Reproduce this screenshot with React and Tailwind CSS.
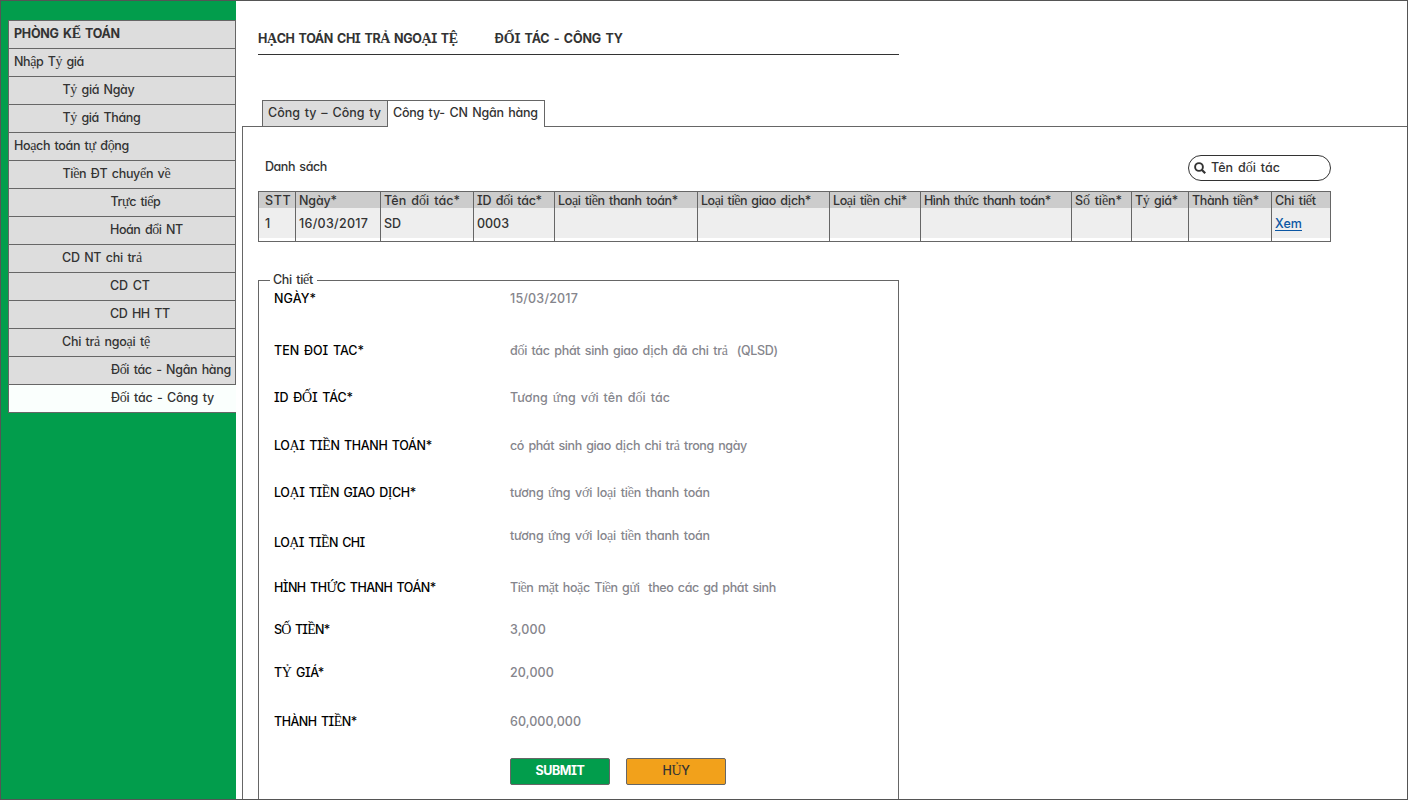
import { useLayoutEffect, useRef } from "react";

const EXTENDED = /([\u1EA0-\u1EF9]+)/;

// Text run set to a given width; stacked Vietnamese letters use the serif face.
function Txt({ w, className = "", children }) {
  const ref = useRef(null);
  useLayoutEffect(() => {
    const el = ref.current;
    el.style.letterSpacing = "0px";
    const natural = el.getBoundingClientRect().width;
    el.style.letterSpacing = `${(w - natural) / (children.length - 0.5)}px`;
  }, [w, children]);
  return (
    <span ref={ref} className={`inline-block shrink-0 self-start whitespace-pre leading-[18px] ${className}`}>
      {children.split(EXTENDED).map((part, i) =>
        i % 2 ? (
          <span key={i} className="font-['Liberation_Serif',serif] text-[14px] leading-none">{part}</span>
        ) : (
          part
        )
      )}
    </span>
  );
}

const MENU = [
  ["PHÒNG KẾ TOÁN", 106, "pl-[5px] font-bold"],
  ["Nhập Tỷ giá", 70, "pl-[5px]"],
  ["Tỷ giá Ngày", 72, "pl-[53.5px]"],
  ["Tỷ giá Tháng", 78, "pl-[53.5px]"],
  ["Hoạch toán tự động", 115, "pl-[5px]"],
  ["Tiền ĐT chuyển về", 108, "pl-[53.5px]"],
  ["Trực tiếp", 50, "pl-[101.5px]"],
  ["Hoán đổi NT", 73, "pl-[101px]"],
  ["CD NT chi trả", 80, "pl-[53px]"],
  ["CD CT", 40, "pl-[101px]"],
  ["CD HH TT", 60, "pl-[101px]"],
  ["Chi trả ngoại tệ", 88, "pl-[53px]"],
  ["Đối tác - Ngân hàng", 120, "pl-[102px]"],
];

const COLUMNS = [
  ["STT", 26, "1", 5],
  ["Ngày*", 38, "16/03/2017", 69],
  ["Tên đối tác*", 76, "SD", 17],
  ["ID đối tác*", 65, "0003", 32],
  ["Loại tiền thanh toán*", 120],
  ["Loại tiền giao dịch*", 110],
  ["Loại tiền chi*", 74],
  ["Hình thức thanh toán*", 127],
  ["Số tiền*", 47],
  ["Tỷ giá*", 43],
  ["Thành tiền*", 67],
  ["Chi tiết", 41, "Xem", 27],
];

const FIELDS = [
  ["NGÀY*", 42, "15/03/2017", 68, "mt-[9px]"],
  ["TEN ĐOI TAC*", 90, "đối tác phát sinh giao dịch đã chi trả  (QLSD)", 268, "mt-9"],
  ["ID ĐỐI TÁC*", 79, "Tương ứng với tên đối tác", 160, "mt-[31px]"],
  ["LOẠI TIỀN THANH TOÁN*", 158, "có phát sinh giao dịch chi trả trong ngày", 237, "mt-8"],
  ["LOẠI TIỀN GIAO DỊCH*", 142, "tương ứng với loại tiền thanh toán", 200, "mt-[31px]"],
  ["LOẠI TIỀN CHI", 91, "tương ứng với loại tiền thanh toán", 200, "mt-[34px]"],
  ["HÌNH THỨC THANH TOÁN*", 162, "Tiền mặt hoặc Tiền gửi  theo các gd phát sinh", 266, "mt-[29px]"],
  ["SỐ TIỀN*", 56, "3,000", 36, "mt-[26px]"],
  ["TỶ GIÁ*", 50, "20,000", 44, "mt-[27px]"],
  ["THÀNH TIỀN*", 83, "60,000,000", 71, "mt-[33px]"],
];

function Sidebar() {
  return (
    <aside className="w-[235px] shrink-0 bg-[#029d4c] pl-[7px] pt-[19px]">
      <ul className="border-l border-t border-[#666]">
        {MENU.map(([label, w, style]) => (
          <li key={label} className={`flex h-7 border-b border-r border-[#666] bg-[#ddd] pt-1 ${style}`}>
            <Txt w={w}>{label}</Txt>
          </li>
        ))}
        <li className="flex h-7 border-b border-[#666] bg-[#fafffd] pl-[102px] pt-1">
          <Txt w={103}>Đối tác - Công ty</Txt>
        </li>
      </ul>
    </aside>
  );
}

function Table() {
  return (
    <div className="mt-[10px] grid h-[51px] w-[1073px] grid-cols-[37px_85px_93px_81px_143px_132px_91px_151px_60px_57px_83px_60px] border-y border-[#666]">
      {COLUMNS.map(([head, w, value, vw], i) => (
        <div key={head} className={`border-l border-[#666] ${i === 11 ? "border-r" : ""}`}>
          <div className={`flex h-4 bg-[#ccc] ${i === 0 ? "pl-[6px]" : "pl-[3px]"}`}>
            <Txt w={w}>{head}</Txt>
          </div>
          <div className={`flex h-[30px] bg-[#eee] pt-[7px] ${i === 0 ? "pl-[6px]" : "pl-[3px]"}`}>
            {value && (
              <Txt w={vw} className={i === 11 ? "h-4 border-b border-[#0b57a4] text-[#0b57a4]" : ""}>
                {value}
              </Txt>
            )}
          </div>
        </div>
      ))}
    </div>
  );
}

function Details() {
  return (
    <section className="mt-[29px] flex w-[641px] grow flex-col">
      <div className="flex h-4">
        <div className="h-[7px] w-3 self-end border-l border-t border-[#666]" />
        <div className="flex w-[47px] pl-[3px]">
          <Txt w={40}>Chi tiết</Txt>
        </div>
        <div className="h-[7px] grow self-end border-r border-t border-[#666]" />
      </div>
      <div className="-mt-[6px] grow border-x border-[#666] pl-[15px]">
        {FIELDS.map(([label, w, value, vw, gap], i) => (
          <div key={label} className={`flex h-4 ${gap}`}>
            <div className="w-[236px] text-black">
              <Txt w={w}>{label}</Txt>
            </div>
            <div className={`text-[#85858c] ${i === 5 ? "-mt-[7px]" : ""}`}>
              <Txt w={vw}>{value}</Txt>
            </div>
          </div>
        ))}
        <div className="mt-[29px] flex gap-4 pl-[236px]">
          <button className="flex h-[27px] w-[100px] justify-center rounded-[2px] border border-[#666] bg-[#029d4c] pt-[3px] font-bold text-white">
            <Txt w={49}>SUBMIT</Txt>
          </button>
          <button className="flex h-[27px] w-[100px] justify-center rounded-[2px] border border-[#666] bg-[#f2a11b] pt-[3px]">
            <Txt w={27}>HỦY</Txt>
          </button>
        </div>
      </div>
    </section>
  );
}

export default function App() {
  return (
    <div className="flex h-[800px] w-[1408px] overflow-hidden border border-[#555] bg-white font-['Inter','Noto_Sans',sans-serif] text-[12.5px] font-medium leading-4 text-[#333] [font-feature-settings:'cv11','cv08'] [word-spacing:1.5px]">
      <Sidebar />
      <main className="flex grow flex-col pl-[6px]">
        <div className="ml-4 mt-[29px] flex h-[25px] w-[641px] border-b border-[#333] font-bold">
          <Txt w={200}>HẠCH TOÁN CHI TRẢ NGOẠI TỆ</Txt>
          <Txt w={128} className="ml-[37px]">ĐỐI TÁC - CÔNG TY</Txt>
        </div>
        <div className="z-10 -mb-px ml-5 mt-[45px] flex h-[27px]">
          <div className="flex w-[125px] border border-r-0 border-[#666] bg-[#ddd] pl-[5px] pt-[3px]">
            <Txt w={113}>Công ty – Công ty</Txt>
          </div>
          <div className="flex w-[158px] border border-b-0 border-[#666] bg-white pl-[5px] pt-[3px]">
            <Txt w={145}>Công ty- CN Ngân hàng</Txt>
          </div>
        </div>
        <div className="flex grow flex-col border-l border-t border-[#666] pl-[15px] pt-7">
          <div className="flex h-[26px] w-[1073px] justify-between pl-[7px]">
            <Txt w={62} className="mt-[3px]">Danh sách</Txt>
            <div className="flex h-[26px] w-[143px] items-center rounded-full border border-[#333] pl-[5px]">
              <svg viewBox="0 0 12 12" className="mr-[5px] size-3" fill="none" stroke="#333" strokeWidth="1.9">
                <circle cx="5" cy="5" r="3.9" />
                <path d="M8 8l3.2 3.2" strokeWidth="2.2" />
              </svg>
              <Txt w={69} className="mt-[3px]">Tên đối tác</Txt>
            </div>
          </div>
          <Table />
          <Details />
        </div>
      </main>
    </div>
  );
}
